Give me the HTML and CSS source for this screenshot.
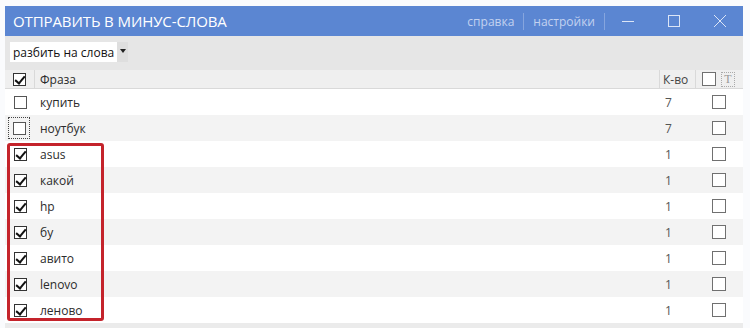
FILE: index.html
```html
<!DOCTYPE html>
<html lang="ru">
<head>
    <meta charset="UTF-8">
    <title>Отправить в минус-слова</title>
    <link rel="stylesheet" href="styles.css">
</head>
<body>
    <div class="window">
        <div class="titlebar">
            <div class="title">ОТПРАВИТЬ В МИНУС-СЛОВА</div>
            <div class="links">
                <span class="link">справка</span>
                <span class="sep"></span>
                <span class="link">настройки</span>
                <span class="sep"></span>
            </div>
            <div class="ctrl">
                <svg width="14" height="14" viewBox="0 0 14 14"><path d="M1 7.5h12" stroke="#dce5f6" stroke-width="1"/></svg>
            </div>
            <div class="ctrl">
                <svg width="14" height="14" viewBox="0 0 14 14"><rect x="1.5" y="1.5" width="11" height="11" fill="none" stroke="#dce5f6" stroke-width="1"/></svg>
            </div>
            <div class="ctrl">
                <svg width="14" height="14" viewBox="0 0 14 14"><path d="M1 1l12 12M13 1L1 13" stroke="#dce5f6" stroke-width="1"/></svg>
            </div>
        </div>

        <div class="toolbar">
            <div class="dropdown">
                <span>разбить на слова</span>
                <span class="arrow"></span>
            </div>
        </div>

        <div class="grid">
            <div class="row head">
                <div class="c-check"><span class="box checked"></span></div>
                <div class="c-phrase">Фраза</div>
                <div class="c-count">К-во</div>
                <div class="c-minus">
                    <span class="box plain"></span>
                    <span class="tbox">T</span>
                </div>
            </div>
            <div class="row">
                <div class="c-check"><span class="box"></span></div>
                <div class="c-phrase">купить</div>
                <div class="c-count">7</div>
                <div class="c-minus"><span class="box plain"></span></div>
            </div>
            <div class="row alt">
                <div class="c-check"><span class="focus"><span class="box"></span></span></div>
                <div class="c-phrase">ноутбук</div>
                <div class="c-count">7</div>
                <div class="c-minus"><span class="box plain"></span></div>
            </div>
            <div class="row">
                <div class="c-check"><span class="box checked"></span></div>
                <div class="c-phrase">asus</div>
                <div class="c-count">1</div>
                <div class="c-minus"><span class="box plain"></span></div>
            </div>
            <div class="row alt">
                <div class="c-check"><span class="box checked"></span></div>
                <div class="c-phrase">какой</div>
                <div class="c-count">1</div>
                <div class="c-minus"><span class="box plain"></span></div>
            </div>
            <div class="row">
                <div class="c-check"><span class="box checked"></span></div>
                <div class="c-phrase">hp</div>
                <div class="c-count">1</div>
                <div class="c-minus"><span class="box plain"></span></div>
            </div>
            <div class="row alt">
                <div class="c-check"><span class="box checked"></span></div>
                <div class="c-phrase">бу</div>
                <div class="c-count">1</div>
                <div class="c-minus"><span class="box plain"></span></div>
            </div>
            <div class="row">
                <div class="c-check"><span class="box checked"></span></div>
                <div class="c-phrase">авито</div>
                <div class="c-count">1</div>
                <div class="c-minus"><span class="box plain"></span></div>
            </div>
            <div class="row alt">
                <div class="c-check"><span class="box checked"></span></div>
                <div class="c-phrase">lenovo</div>
                <div class="c-count">1</div>
                <div class="c-minus"><span class="box plain"></span></div>
            </div>
            <div class="row">
                <div class="c-check"><span class="box checked"></span></div>
                <div class="c-phrase">леново</div>
                <div class="c-count">1</div>
                <div class="c-minus"><span class="box plain"></span></div>
            </div>
            <div class="bottom"></div>

            <!-- highlight around the checked words -->
            <div class="highlight"></div>
        </div>
    </div>
</body>
</html>
```

FILE: styles.css
```css
body {
    margin: 0;
    padding: 6px 0 0 5px;
    background: #fafbfd;
    font-family: "Open Sans", "Noto Sans", sans-serif;
    font-size: 12px;
    color: #2b2b2b;
    overflow: hidden;
}
.window {
    width: 738px;
    background: #fff;
}
.titlebar {
    height: 30px;
    background: #5b86d2;
    display: flex;
    align-items: center;
}
.title {
    flex: 1;
    padding-left: 8px;
    color: #fff;
    font-size: 15px;
    letter-spacing: -0.1px;
}
.links {
    display: flex;
    align-items: center;
    gap: 9px;
    color: #c3d2f0;
    font-size: 12px;
}
.sep {
    width: 1px;
    height: 17px;
    background: #86a5de;
}
.ctrl {
    width: 46px;
    display: flex;
    justify-content: center;
}
.ctrl:first-of-type {
    margin-left: 3px;
}
.toolbar {
    height: 34px;
    background: #e6e6e6;
    padding: 6px 5px 0;
    box-sizing: border-box;
}
.dropdown {
    display: inline-flex;
    align-items: center;
    height: 20px;
    background: #fff;
    color: #111;
    font-size: 12px;
    padding-left: 3px;
}
.arrow {
    width: 11px;
    height: 20px;
    margin-left: 3px;
    background: #dedede;
    position: relative;
}
.arrow::after {
    content: "";
    position: absolute;
    left: 3px;
    top: 7px;
    border-left: 3px solid transparent;
    border-right: 3px solid transparent;
    border-top: 4px solid #222;
}
.grid {
    position: relative;
}
.row {
    display: flex;
    height: 26px;
    align-items: center;
}
.row.alt {
    background: #f3f3f3;
}
.row.head {
    height: 19px;
    background: #efefef;
    border-bottom: 1px solid #d9d9d9;
    box-sizing: border-box;
}
.row.head > div {
    height: 100%;
    display: flex;
    align-items: center;
    border-right: 1px solid #d9d9d9;
    box-sizing: border-box;
}
.row.head > div:last-child {
    border-right: none;
}
.c-check {
    width: 30px;
    display: flex;
    justify-content: center;
    align-items: center;
}
.c-phrase {
    width: 625px;
    padding-left: 5px;
    box-sizing: border-box;
}
.c-count {
    width: 36px;
    padding-left: 5px;
    box-sizing: border-box;
    color: #555;
}
.row.head .c-count {
    padding-left: 3px;
    color: #444;
}
.c-minus {
    width: 47px;
    display: flex;
    align-items: center;
    padding-left: 16px;
    box-sizing: border-box;
}
.row.head .c-minus {
    padding-left: 6px;
    gap: 5px;
}
.box {
    width: 13px;
    height: 13px;
    border: 1px solid #555;
    background: #fff;
    box-sizing: border-box;
    display: inline-block;
    position: relative;
}
.box.plain {
    width: 14px;
    height: 14px;
    border-color: #707070;
}
.box.checked {
    border-color: #333;
}
.box.checked::after {
    content: "";
    position: absolute;
    left: 3px;
    top: 0;
    width: 4px;
    height: 8px;
    border-right: 2px solid #111;
    border-bottom: 2px solid #111;
    transform: rotate(40deg);
}
.focus {
    display: inline-flex;
    justify-content: center;
    align-items: center;
    width: 22px;
    height: 22px;
    border: 1px dotted #444;
    box-sizing: border-box;
    margin-left: -2px;
}
.tbox {
    width: 14px;
    height: 15px;
    border: 1px dotted #aaa;
    box-sizing: border-box;
    font-family: "Liberation Serif", serif;
    font-size: 12px;
    line-height: 13px;
    text-align: center;
    color: #999;
}
.bottom {
    height: 6px;
    background: #ebebeb;
}
.highlight {
    position: absolute;
    left: 2px;
    top: 73px;
    width: 97px;
    height: 178px;
    border: 3px solid #c4232b;
    border-radius: 3px;
    box-sizing: border-box;
}
```
